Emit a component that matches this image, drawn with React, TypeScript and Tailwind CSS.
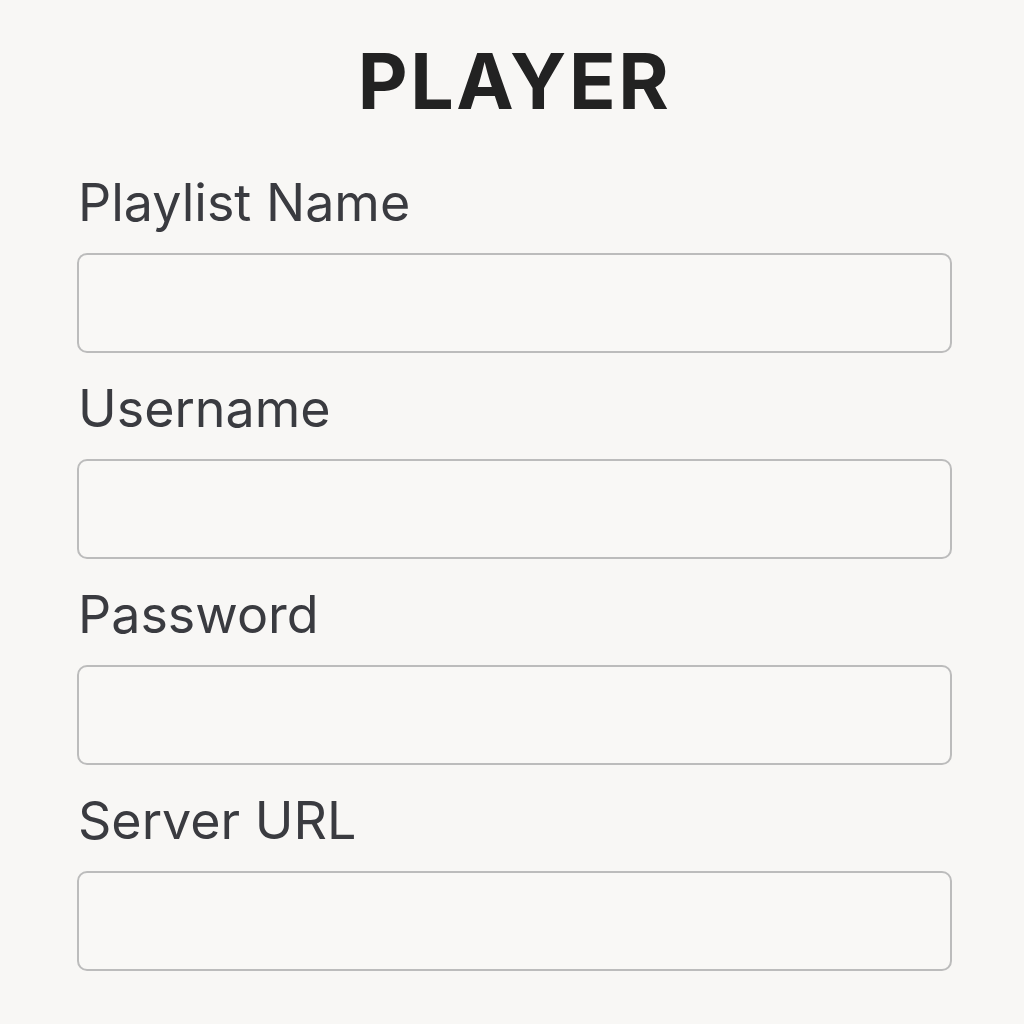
export default function App() {
  const fields = ["Playlist Name", "Username", "Password", "Server URL"];
  return (
    <div className="min-h-[1024px] w-[1024px] bg-[#f8f7f5] pl-[77px] pr-[72px] pt-[36px]" style={{ fontFamily: "Inter, 'Noto Sans', sans-serif" }}>
      <h1 className="text-center text-[77px] font-bold leading-[90px] tracking-[2.5px] text-[#222222]">PLAYER</h1>
      <div className="mt-[44px] flex flex-col gap-[23px]">
        {fields.map((f) => (
          <div key={f} className="flex flex-col">
            <label className="h-[83px] pl-[1px] pt-[7px] text-[52px] leading-[52px] text-[#3a3b40]">{f}</label>
            <input className="h-[100px] w-[875px] rounded-[10px] border-2 border-[#bcbcbc] bg-[#f9f8f6] outline-none" />
          </div>
        ))}
      </div>
    </div>
  );
}
